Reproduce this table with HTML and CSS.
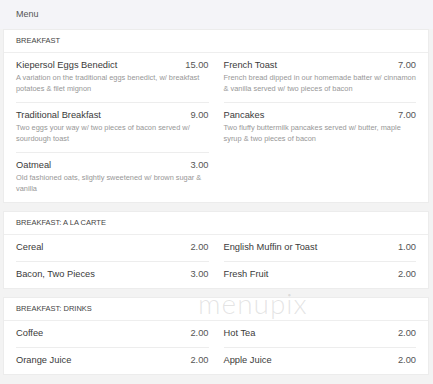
FILE: index.html
```html
<!DOCTYPE html>
<html>
<head>
<meta charset="utf-8">
<link rel="stylesheet" href="styles.css">
</head>
<body>
<div class="page">
  <div class="topbar">Menu</div>

  <section class="card">
    <div class="card-head">BREAKFAST</div>
    <div class="grid">
      <div class="item">
        <div class="row"><span class="name">Kiepersol Eggs Benedict</span><span class="price">15.00</span></div>
        <div class="desc">A variation on the traditional eggs benedict, w/ breakfast potatoes &amp; filet mignon</div>
      </div>
      <div class="item">
        <div class="row"><span class="name">French Toast</span><span class="price">7.00</span></div>
        <div class="desc">French bread dipped in our homemade batter w/ cinnamon &amp; vanilla served w/ two pieces of bacon</div>
      </div>
      <div class="item">
        <div class="row"><span class="name">Traditional Breakfast</span><span class="price">9.00</span></div>
        <div class="desc">Two eggs your way w/ two pieces of bacon served w/ sourdough toast</div>
      </div>
      <div class="item">
        <div class="row"><span class="name">Pancakes</span><span class="price">7.00</span></div>
        <div class="desc">Two fluffy buttermilk pancakes served w/ butter, maple<br>syrup &amp; two pieces of bacon</div>
      </div>
      <div class="item">
        <div class="row"><span class="name">Oatmeal</span><span class="price">3.00</span></div>
        <div class="desc">Old fashioned oats, slightly sweetened w/ brown sugar &amp; vanilla</div>
      </div>
    </div>
  </section>

  <section class="card">
    <div class="card-head">BREAKFAST: A LA CARTE</div>
    <div class="grid">
      <div class="item simple"><div class="row"><span class="name">Cereal</span><span class="price">2.00</span></div></div>
      <div class="item simple"><div class="row"><span class="name">English Muffin or Toast</span><span class="price">1.00</span></div></div>
      <div class="item simple"><div class="row"><span class="name">Bacon, Two Pieces</span><span class="price">3.00</span></div></div>
      <div class="item simple"><div class="row"><span class="name">Fresh Fruit</span><span class="price">2.00</span></div></div>
    </div>
  </section>

  <section class="card">
    <div class="card-head">BREAKFAST: DRINKS</div>
    <div class="grid">
      <div class="item simple"><div class="row"><span class="name">Coffee</span><span class="price">2.00</span></div></div>
      <div class="item simple"><div class="row"><span class="name">Hot Tea</span><span class="price">2.00</span></div></div>
      <div class="item simple"><div class="row"><span class="name">Orange Juice</span><span class="price">2.00</span></div></div>
      <div class="item simple"><div class="row"><span class="name">Apple Juice</span><span class="price">2.00</span></div></div>
    </div>
  </section>

  <div class="watermark">menupix</div>
</div>
</body>
</html>
```

FILE: styles.css
```css
html, body {
  margin: 0;
  padding: 0;
}
body {
  background: #f3f3f3;
  font-family: "Liberation Sans", Arial, sans-serif;
  color: #333;
  width: 433px;
  height: 384px;
  overflow: hidden;
}
.page {
  position: relative;
  padding: 0 4px 0 3px;
}
.topbar {
  margin: 0 -4px 0 -3px;
  height: 29px;
  line-height: 29px;
  padding-left: 16px;
  background: #f4f4f8;
  font-size: 9px;
  color: #555;
}
.card {
  background: #fff;
  border: 1px solid #ececec;
  margin-bottom: 8px;
  padding: 0 12px;
}
.card-head {
  height: 22px;
  line-height: 22px;
  font-size: 7.5px;
  color: #444;
  margin: 0 -12px;
  padding: 0 12px;
  border-bottom: 1px solid #eeeeee;
}
.grid {
  display: grid;
  grid-template-columns: 1fr 1fr;
  column-gap: 15px;
}
.item {
  padding: 6px 0 8px;
}
.item:nth-child(n+3) {
  border-top: 1px solid #ededed;
}
.item.simple {
  padding: 6px 0 7px;
}
.row {
  display: flex;
  justify-content: space-between;
  line-height: 13px;
  font-size: 9.3px;
  color: #3a3a3a;
}
.price {
  color: #555;
}
.desc {
  font-size: 7.4px;
  line-height: 11px;
  color: #979797;
  margin-right: -1px;
}
.watermark {
  position: absolute;
  left: 198px;
  top: 286px;
  font-family: "Lato", "DejaVu Sans", sans-serif;
  font-weight: 300;
  font-size: 28px;
  letter-spacing: 1px;
  color: rgba(160, 160, 160, 0.28);
  pointer-events: none;
}
```
